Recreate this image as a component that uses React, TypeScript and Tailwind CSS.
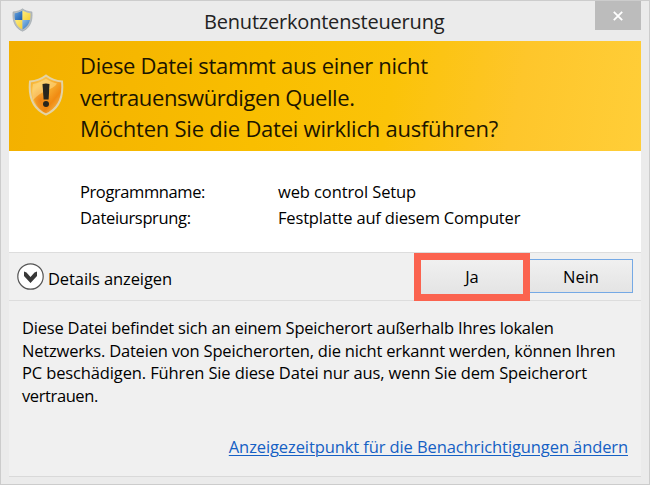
import React from "react";

function WindowsShield() {
  return (
    <svg className="h-6 w-[21px]" viewBox="0 0 20 24" preserveAspectRatio="none">
      <defs>
        <clipPath id="uac">
          <path d="M10 2.500C7.800 4 5.200 5 2.500 5.200C2 12.500 4.200 18.500 10 21.500C15.800 18.500 18 12.500 17.500 5.200C14.800 5 12.200 4 10 2.500Z" />
        </clipPath>
        <linearGradient id="blue" x1="0" y1="0" x2="1" y2="1">
          <stop offset="0" stopColor="#8dbde6" />
          <stop offset=".6" stopColor="#3f80c8" />
          <stop offset="1" stopColor="#1d5cab" />
        </linearGradient>
        <linearGradient id="yellow" x1="0" y1="0" x2="1" y2="1">
          <stop offset="0" stopColor="#fff087" />
          <stop offset="1" stopColor="#f3cb2c" />
        </linearGradient>
      </defs>
      <path d="M10 .8C7.800 2.600 4.600 3.700 1 3.900C.2 12.600 2.600 20 10 23.200C17.400 20 19.800 12.600 19 3.900C15.400 3.700 12.200 2.600 10 .8Z" fill="#b5bcc0" stroke="#9fa7ab" strokeWidth=".6" />
      <g clipPath="url(#uac)">
        <path d="M0 0H10V12H0Z" fill="url(#blue)" />
        <path d="M10 0H20V12H10Z" fill="url(#yellow)" />
        <path d="M0 12H10V24H0Z" fill="url(#yellow)" />
        <path d="M10 12H20V24H10Z" fill="url(#blue)" />
      </g>
    </svg>
  );
}

function WarningShield() {
  return (
    <svg className="h-[42px] w-9" viewBox="0 0 36 42">
      <defs>
        <linearGradient id="warn" x1="0" y1="0" x2="1" y2="1">
          <stop offset="0" stopColor="#f5a81c" />
          <stop offset=".25" stopColor="#fac04a" />
          <stop offset=".45" stopColor="#f8b132" />
          <stop offset=".68" stopColor="#f08a12" />
          <stop offset="1" stopColor="#fbd468" />
        </linearGradient>
        <radialGradient id="glow" cx=".3" cy=".65" r=".4">
          <stop offset="0" stopColor="#ea720c" stopOpacity=".7" />
          <stop offset="1" stopColor="#ea720c" stopOpacity="0" />
        </radialGradient>
      </defs>
      <path d="M18 1.500C13.500 5 8 7 2 7.500C.6 21.500 4.500 34.500 18 40.500C31.500 34.500 35.400 21.500 34 7.500C28 7 22.500 5 18 1.500Z" fill="url(#warn)" stroke="#e3d3a6" strokeWidth="2" />
      <path d="M18 3.500C13.500 6.700 9 8.500 4 9C3 21 6.500 33 18 38.500C29.500 33 33 21 32 9C27 8.500 22.500 6.700 18 3.500Z" fill="url(#glow)" />
      <path d="M5 10C10 9.300 14 7.500 18 4.800C22 7.500 25 8.700 29 9.500C25 16 14 16 5 26C4 20 4 15 5 10Z" fill="#ffe6a0" opacity=".45" />
      <path d="M14.500 10Q18 9 21.500 10L20.600 25.500H15.600Z" fill="#29261d" />
      <circle cx="18" cy="30" r="3" fill="#29261d" />
    </svg>
  );
}

export default function App() {
  return (
    <div className="flex h-[485px] w-[650px] flex-col overflow-hidden border border-[#cccccc] bg-[#ebebeb] px-2 font-['Open_Sans','Noto_Sans',sans-serif] text-black">
      <header className="flex h-10 shrink-0 items-start">
        <div className="w-[76px] pt-[7px] pl-[3px]">
          <WindowsShield />
        </div>
        <h1 className="flex-1 pt-[6px] pl-[119px] text-[20px] leading-[30px] whitespace-nowrap text-[#222]">
          <span className="tracking-[-0.2px]">Benutzerkontensteuerung</span>
        </h1>
        <button className="flex h-[29px] w-[46px] items-center justify-center bg-[#bcbcbc]" aria-label="Schließen">
          <svg className="h-2.5 w-2.5" viewBox="0 0 10 10">
            <path d="M.8.8L9.200 9.200M9.200.8L.8 9.200" stroke="#fff" strokeWidth="1.800" />
          </svg>
        </button>
      </header>

      <main className="flex h-[436px] w-[632px] shrink-0 flex-col border-b border-[#d9d9d9] bg-[#f0f0f0]">
        <section className="flex h-[110px] shrink-0 bg-[linear-gradient(100deg,#f3b000_0%,#f9be00_40%,#fbc308_60%,#fec62b_80%,#ffce38_100%)]">
          <div className="w-[71px] pt-[33px] pl-[19px]">
            <WarningShield />
          </div>
          <div className="pt-2 text-[22px] leading-8 whitespace-nowrap text-[#1c1500]">
            <p className="tracking-[-0.31px]">Diese Datei stammt aus einer nicht</p>
            <p className="tracking-[-0.42px]">vertrauenswürdigen Quelle.</p>
            <p className="-mt-px tracking-[-0.24px]">Möchten Sie die Datei wirklich ausführen?</p>
          </div>
        </section>

        <section className="grid h-[101px] shrink-0 grid-cols-[198px_1fr] content-start bg-white pt-[28px] pl-[71px] text-[16.500px] leading-[26px] whitespace-nowrap">
          <span className="tracking-[-0.4px]">Programmname:</span>
          <span className="tracking-[-0.1px]">web control Setup</span>
          <span className="tracking-[-0.35px]">Dateiursprung:</span>
          <span className="tracking-[-0.17px]">Festplatte auf diesem Computer</span>
        </section>

        <section className="flex h-[49px] shrink-0 border-y border-[#dddddd] text-[16.500px] leading-[26px]">
          <button className="flex w-[405px] items-start pt-[10px] pl-2">
            <svg className="h-[27px] w-[27px]" viewBox="0 0 27 27">
              <circle cx="13.500" cy="13.500" r="12.700" fill="#fff" stroke="#555" strokeWidth="1.200" />
              <path d="M7 8.500L9.500 9.500L13.500 14L17.500 9.500L20 8.500V13L13.500 20L7 13Z" fill="#383838" />
            </svg>
            <span className="mt-[3px] ml-1 tracking-[-0.1px]">Details anzeigen</span>
          </button>
          <button className="flex h-12 w-[116px] items-center justify-center border-[7px] border-[#fb634f] bg-linear-to-b from-[#f0f0f0] to-[#e4e4e4] pb-px">Ja</button>
          <button className="mt-1.5 flex h-[34px] w-[103px] items-center justify-center border border-l-0 border-[#75a9e5] bg-linear-to-b from-[#f0f0f0] to-[#e4e4e4] pt-0.5">Nein</button>
        </section>

        <section className="h-[133px] shrink-0 pt-4 pl-[13px] text-[16.500px] leading-[22.700px] whitespace-nowrap">
          <p className="tracking-[-0.2px]">Diese Datei befindet sich an einem Speicherort außerhalb Ihres lokalen</p>
          <p className="tracking-[-0.19px]">Netzwerks. Dateien von Speicherorten, die nicht erkannt werden, können Ihren</p>
          <p className="tracking-[-0.13px]">PC beschädigen. Führen Sie diese Datei nur aus, wenn Sie dem Speicherort</p>
          <p className="tracking-[-0.4px]">vertrauen.</p>
        </section>
        <div className="flex shrink-0 justify-end pr-[13px] text-[16.500px] leading-[26px] whitespace-nowrap">
          <a className="tracking-[-0.1px] text-[#1560c4] underline decoration-1 underline-offset-2">Anzeigezeitpunkt für die Benachrichtigungen ändern</a>
        </div>
      </main>
    </div>
  );
}
